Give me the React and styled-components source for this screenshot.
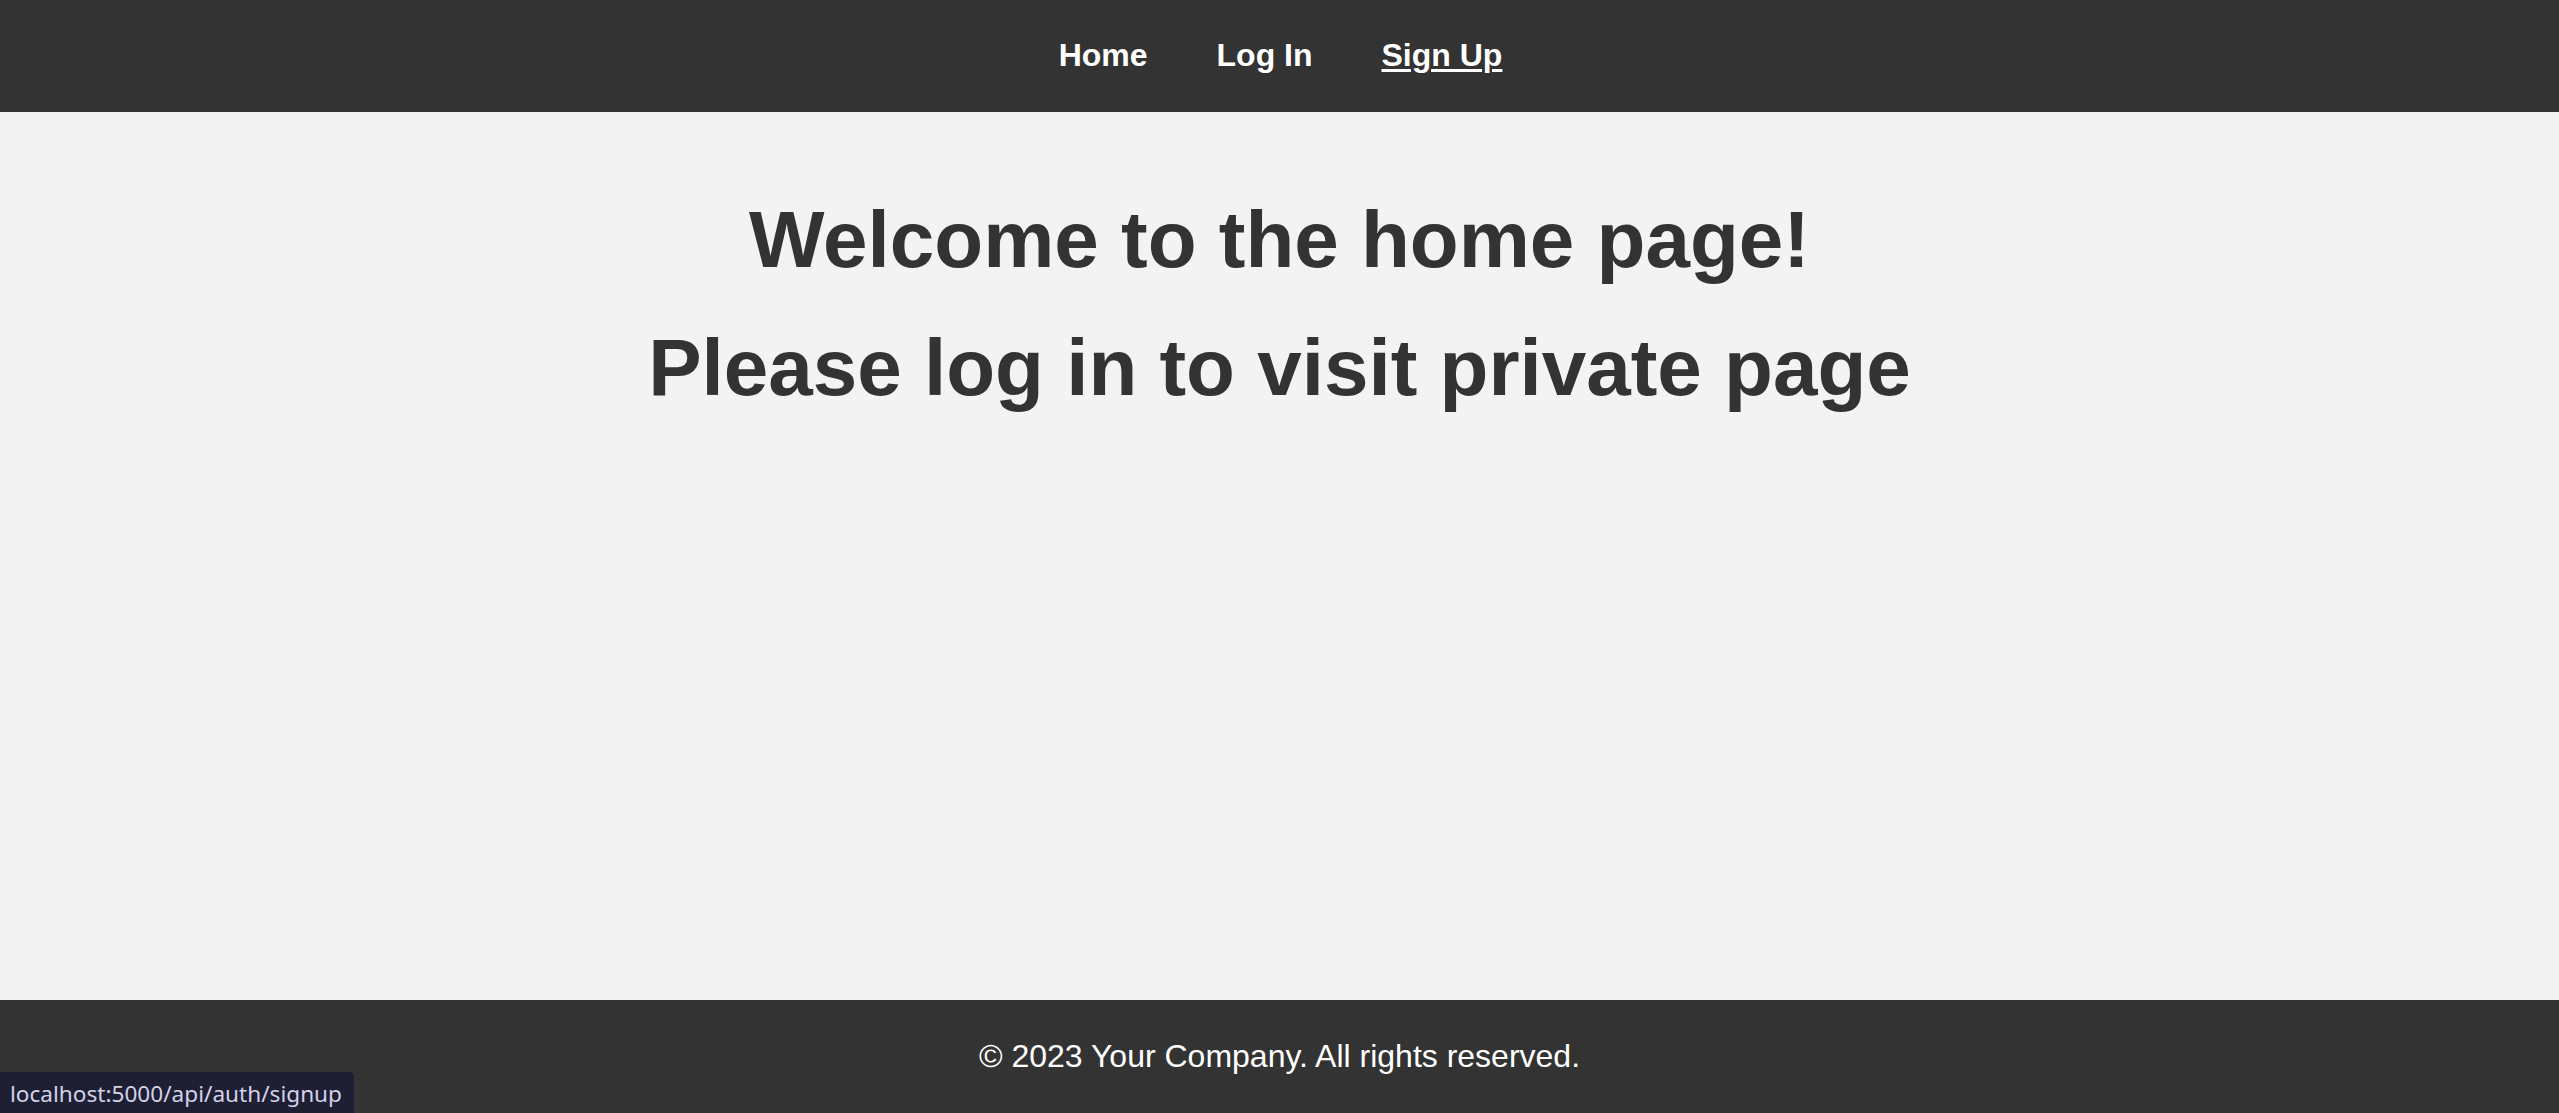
import React from "react";
import styled, { createGlobalStyle } from "styled-components";

const GlobalStyle = createGlobalStyle`
    html, body {
        margin: 0;
        padding: 0;
        background: #f3f3f3;
        font-family: "Liberation Sans", Arial, sans-serif;
    }
`;

const Page = styled.div`
    display: flex;
    flex-direction: column;
    min-height: 100vh;
    background: #f3f3f3;
    color: #333333;
`;

const Header = styled.header`
    display: flex;
    justify-content: center;
    align-items: flex-start;
    height: 112px;
    box-sizing: border-box;
    padding-top: 37px;
    padding-left: 2px;
    background: #333333;
`;

const NavList = styled.nav`
    display: flex;
    gap: 69px;
`;

const NavLink = styled.a`
    color: #ffffff;
    font-size: 32px;
    font-weight: 700;
    text-decoration: ${(p) => (p.$hover ? "underline" : "none")};
    text-decoration-thickness: 3px;
    text-underline-offset: 3px;
    cursor: pointer;
`;

const Main = styled.main`
    flex: 1;
    display: flex;
    flex-direction: column;
    align-items: center;
    gap: 36px;
    padding-top: 82px;
`;

const Title = styled.h1`
    margin: 0;
    font-size: 80px;
    font-weight: 700;
    color: #333333;
    text-align: center;
`;

const Footer = styled.footer`
    display: flex;
    justify-content: center;
    padding: 38px 0;
    background: #333333;
    color: #ffffff;
    font-size: 32px;
`;

const StatusBar = styled.div`
    position: fixed;
    left: 0;
    bottom: 0;
    width: 354px;
    height: 41px;
    box-sizing: border-box;
    padding: 6px 0 0 10px;
    background: #1f1f33;
    border-top-right-radius: 5px;
    color: #d2d2ea;
    font-family: "Noto Sans", "Open Sans", sans-serif;
    font-size: 22.6px;
    line-height: 32px;
    white-space: nowrap;
`;

export default function App() {
    return (
        <Page>
            <GlobalStyle />
            {/* nav */}
            <Header>
                <NavList>
                    <NavLink>Home</NavLink>
                    <NavLink>Log In</NavLink>
                    <NavLink $hover>Sign Up</NavLink>
                </NavList>
            </Header>

            {/* content */}
            <Main>
                <Title>Welcome to the home page!</Title>
                <Title>Please log in to visit private page</Title>
            </Main>

            <Footer>© 2023 Your Company. All rights reserved.</Footer>

            {/* browser link preview */}
            <StatusBar>localhost:5000/api/auth/signup</StatusBar>
        </Page>
    );
}
